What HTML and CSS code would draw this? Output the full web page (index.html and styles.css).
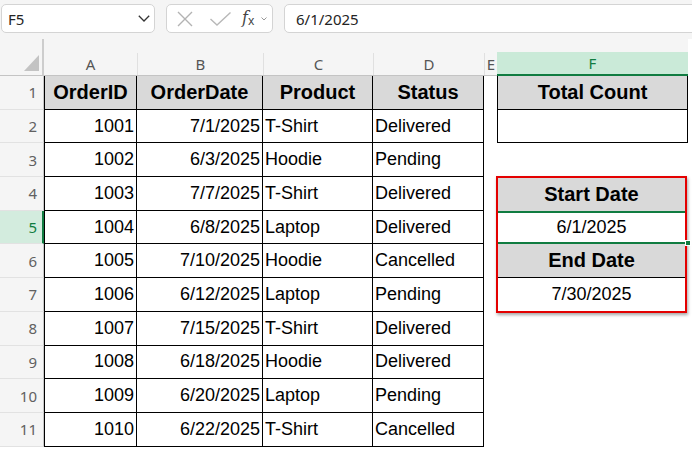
FILE: index.html
```html
<!DOCTYPE html>
<html>
<head>
<meta charset="utf-8">
<link rel="stylesheet" href="styles.css">
</head>
<body>
<div class="app">
  <div class="fbar">
    <div class="namebox">
      <span>F5</span>
      <svg class="chev" width="12" height="7" viewBox="0 0 12 7"><polyline points="0.8,0.8 6,6 11.2,0.8" fill="none" stroke="#333" stroke-width="1.3"/></svg>
    </div>
    <div class="fxbox">
      <svg class="ix" width="16" height="16" viewBox="0 0 16 16"><path d="M1 1 L15 15 M15 1 L1 15" stroke="#b3b3b3" stroke-width="1.4" fill="none"/></svg>
      <svg class="ic" width="21" height="14" viewBox="0 0 21 14"><polyline points="0.5,7 7,13 20.5,0.5" fill="none" stroke="#b8b8b8" stroke-width="1.4"/></svg>
      <span class="fx"><i>f</i><span class="sx">x</span></span>
      <svg class="chs" width="6" height="4" viewBox="0 0 6 4"><polyline points="0.5,0.5 3,3 5.5,0.5" fill="none" stroke="#999" stroke-width="1"/></svg>
    </div>
    <div class="formula">6/1/2025</div>
  </div>

  <div class="sheet">
    <div class="corner">
      <svg class="tri" width="15" height="16" viewBox="0 0 15 16"><polygon points="15,0 15,16 0,16" fill="#c3c3c3"/></svg>
    </div>
    <div class="colheads">
      <div class="ch">A</div>
      <div class="ch">B</div>
      <div class="ch">C</div>
      <div class="ch">D</div>
      <div class="ch">E</div>
      <div class="ch sel">F</div>
    </div>
    <div class="rowheads">
      <div class="rh">1</div>
      <div class="rh">2</div>
      <div class="rh">3</div>
      <div class="rh">4</div>
      <div class="rh sel">5</div>
      <div class="rh">6</div>
      <div class="rh">7</div>
      <div class="rh">8</div>
      <div class="rh">9</div>
      <div class="rh">10</div>
      <div class="rh">11</div>
    </div>
    <div class="cells">
      <div class="dates">
        <div class="dh">Start Date</div>
        <div class="dv cur">6/1/2025<span class="handle"></span></div>
        <div class="dh end">End Date</div>
        <div class="dv">7/30/2025</div>
      </div>

      <div class="c t a h">OrderID</div><div class="c t h">OrderDate</div><div class="c t h">Product</div><div class="c t h">Status</div><div class="c"></div><div class="c tot h">Total Count</div>

      <div class="c t a r">1001</div><div class="c t r">7/1/2025</div><div class="c t l">T-Shirt</div><div class="c t l">Delivered</div><div class="c"></div><div class="c tot"></div>
      <div class="c t a r">1002</div><div class="c t r">6/3/2025</div><div class="c t l">Hoodie</div><div class="c t l">Pending</div><div class="c"></div><div class="c"></div>
      <div class="c t a r">1003</div><div class="c t r">7/7/2025</div><div class="c t l">T-Shirt</div><div class="c t l">Delivered</div><div class="c"></div>
      <div class="c t a r">1004</div><div class="c t r">6/8/2025</div><div class="c t l">Laptop</div><div class="c t l">Delivered</div><div class="c"></div>
      <div class="c t a r">1005</div><div class="c t r">7/10/2025</div><div class="c t l">Hoodie</div><div class="c t l">Cancelled</div><div class="c"></div>
      <div class="c t a r">1006</div><div class="c t r">6/12/2025</div><div class="c t l">Laptop</div><div class="c t l">Pending</div><div class="c"></div>
      <div class="c t a r">1007</div><div class="c t r">7/15/2025</div><div class="c t l">T-Shirt</div><div class="c t l">Delivered</div><div class="c"></div><div class="c"></div>
      <div class="c t a r">1008</div><div class="c t r">6/18/2025</div><div class="c t l">Hoodie</div><div class="c t l">Delivered</div><div class="c"></div><div class="c"></div>
      <div class="c t a r">1009</div><div class="c t r">6/20/2025</div><div class="c t l">Laptop</div><div class="c t l">Pending</div><div class="c"></div><div class="c"></div>
      <div class="c t a r">1010</div><div class="c t r">6/22/2025</div><div class="c t l">T-Shirt</div><div class="c t l">Cancelled</div><div class="c"></div><div class="c"></div>
    </div>
  </div>
</div>
</body>
</html>
```

FILE: styles.css
```css
* { box-sizing: border-box; margin: 0; padding: 0; }
html, body { width: 692px; height: 450px; overflow: hidden; background: #fff; }
body { font-family: "Liberation Sans", Arial, sans-serif; color: #000; }

.app { width: 692px; }

/* formula bar */
.fbar {
  height: 39px;
  background: #f5f5f5;
  display: flex;
  align-items: flex-start;
  gap: 11px;
  padding: 4px 0 0 1px;
  overflow: hidden;
}
.namebox, .fxbox, .formula {
  height: 29px;
  background: #fff;
  border: 1px solid #d4d4d4;
  border-radius: 5px;
  display: flex;
  align-items: center;
  font-family: "Noto Sans", "Open Sans", sans-serif;
  font-size: 15px;
  color: #242424;
}
.namebox {
  width: 154px;
  flex: none;
  justify-content: space-between;
  padding: 0 4px 0 6px;
}
.fxbox {
  width: 107px;
  flex: none;
  padding-left: 10px;
}
.ix { margin-right: 17px; flex: none; }
.ic { margin-right: 11px; flex: none; }
.fx {
  font-family: "DejaVu Serif", serif;
  font-size: 16px;
  color: #444;
  display: flex;
  align-items: baseline;
  margin-top: -2px;
}
.fx i { font-style: italic; }
.sx { font-family: "Noto Sans", sans-serif; font-size: 12px; margin-left: 0; position: relative; top: 2px; }
.chs { margin-left: 7px; flex: none; }
.formula {
  flex: 1;
  margin-right: -10px;
  padding-left: 11px;
}

/* sheet */
.sheet {
  display: grid;
  grid-template-columns: 44px 644px;
  grid-template-rows: 37px auto;
}
.corner {
  position: relative;
  background: #f5f5f5;
  border-right: 2px solid #cdcdcd;
  border-bottom: 1px solid #c4c4c4;
}
.tri { position: absolute; right: 3px; bottom: 4px; }
.colheads {
  display: grid;
  grid-template-columns: 93px 126px 110px 111px 13px 191px;
  align-items: end;
  background: #f5f5f5;
  border-bottom: 1px solid #c4c4c4;
}
.ch {
  height: 22px;
  border-left: 1px solid #e0e0e0;
  display: flex;
  align-items: center;
  justify-content: center;
  font-family: "Noto Sans", "Open Sans", sans-serif;
  font-size: 15px;
  color: #555;
}
.ch:first-child { border-left: none; }
.ch.sel {
  height: 24px;
  margin-bottom: -1px;
  background: #caead8;
  color: #107c41;
  border-bottom: 2px solid #107c41;
  border-left: none;
}

.rowheads {
  display: grid;
  grid-template-rows: repeat(11, 33.7px);
  background: #f5f5f5;
}
.rh {
  border-right: 1px solid #c6c6c6;
  border-bottom: 1px solid #e2e2e2;
  display: flex;
  align-items: center;
  justify-content: flex-end;
  padding-right: 6px;
  font-family: "Noto Sans", "Open Sans", sans-serif;
  font-size: 15px;
  color: #616161;
}
.rh.sel {
  background: #d3ecde;
  color: #107c41;
  border-right: 2px solid #107c41;
  padding-right: 5px;
}

.cells {
  display: grid;
  grid-template-columns: 93px 126px 110px 111px 13px 191px;
  grid-template-rows: repeat(11, 33.7px);
}
.c {
  display: flex;
  align-items: center;
  font-size: 18px;
  white-space: nowrap;
  overflow: hidden;
}
.t { border-right: 1px solid #000; border-bottom: 1px solid #000; }
.a { border-left: 1px solid #000; }
.h {
  background: #d9d9d9;
  font-weight: bold;
  font-size: 20px;
  justify-content: center;
}
.r { justify-content: flex-end; padding-right: 2px; }
.l { padding-left: 2px; }
.tot {
  border-left: 1px solid #000;
  border-right: 1px solid #000;
  border-bottom: 1px solid #000;
}

.dates {
  grid-column: 6;
  grid-row: 4 / 8;
  margin: -1px 1px -1px -1px;
  border: 2px solid #e40000;
  box-shadow: 1px 2px 3px rgba(0, 0, 0, 0.35);
  display: grid;
  grid-template-rows: repeat(4, 1fr);
  position: relative;
  z-index: 1;
  background: #fff;
}
.dh {
  background: #d9d9d9;
  font-weight: bold;
  font-size: 20px;
  display: flex;
  align-items: center;
  justify-content: center;
}
.dh.end { border-bottom: 1px solid #000; }
.dv {
  font-size: 18px;
  display: flex;
  align-items: center;
  justify-content: center;
  position: relative;
}
.dv.cur {
  border-top: 2px solid #107c41;
  border-bottom: 2px solid #107c41;
}
.handle {
  position: absolute;
  width: 6px;
  height: 6px;
  right: -6px;
  bottom: -4px;
  background: #107c41;
  border: 1px solid #fff;
}
```
